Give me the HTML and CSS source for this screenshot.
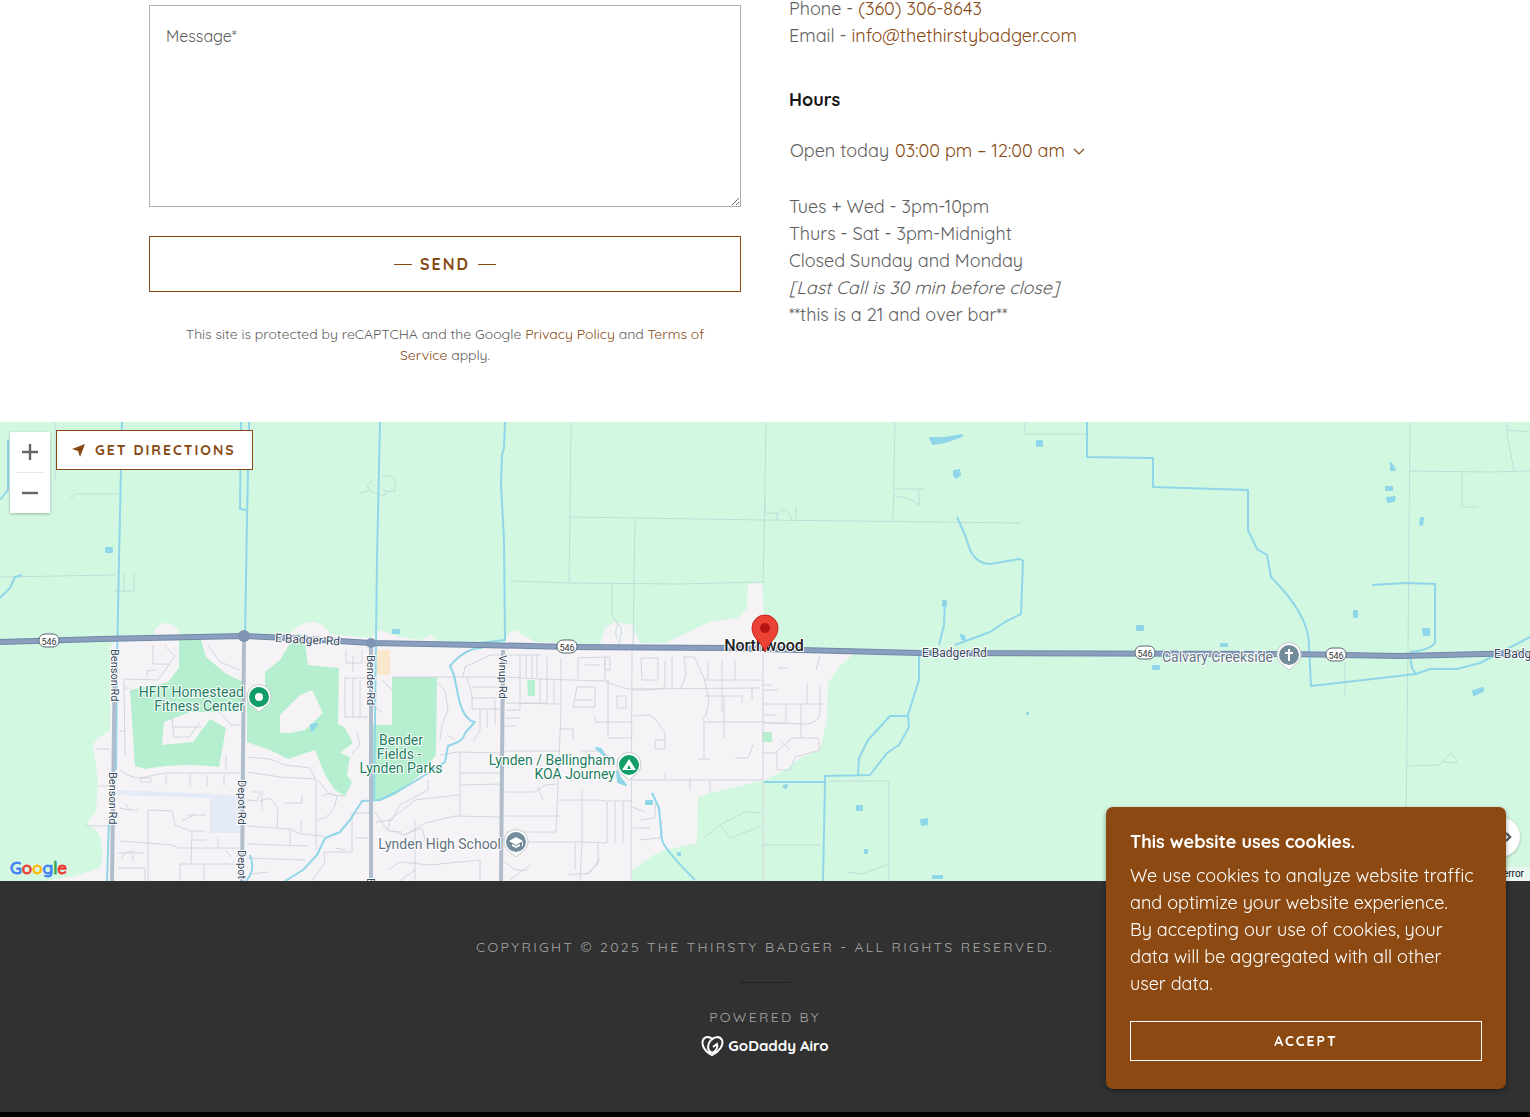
FILE: index.html
```html
<!DOCTYPE html>
<html lang="en">
<head>
<meta charset="utf-8">
<meta name="viewport" content="width=device-width, initial-scale=1">
<title>The Thirsty Badger</title>
<link rel="stylesheet" href="styles.css">
</head>
<body>
<main>
  <section class="contact">
    <form class="contact-form">
      <textarea class="message" aria-label="Message" placeholder="Message*"></textarea>
      <button class="send" type="button"><span>Send</span></button>
      <p class="legal">This site is protected by reCAPTCHA and the Google <a href="#privacy">Privacy Policy</a> and <a href="#terms">Terms of Service</a> apply.</p>
    </form>
    <div class="details">
      <p>Phone - <a href="tel:3603068643">(360) 306-8643</a></p>
      <p>Email - <a href="mailto:info@thethirstybadger.com">info@thethirstybadger.com</a></p>
      <h2>Hours</h2>
      <div class="today">Open today
        <button class="hours-toggle" type="button">03:00 pm – 12:00 am
          <svg width="12" height="12" viewBox="0 0 12 12" aria-hidden="true"><path d="M1 4l5 5 5-5" fill="none" stroke="currentColor" stroke-width="1.1"/></svg>
        </button>
      </div>
      <p>Tues + Wed - 3pm-10pm</p>
      <p>Thurs - Sat - 3pm-Midnight</p>
      <p>Closed Sunday and Monday</p>
      <p><em>[Last Call is 30 min before close]</em></p>
      <p>**this is a 21 and over bar**</p>
    </div>
  </section>

  <section class="map" aria-label="Map">
    <svg class="map-canvas" viewBox="0 422 1530 459" preserveAspectRatio="xMidYMid slice">
      <rect class="farm" x="0" y="422" width="1530" height="459"/>
      <!-- built-up area -->
      <path class="town" d="M111 645L118 640 152 639 156 628Q167 617 178 630L181 639 244 637 290 633Q315 610 330 634L370 638 380 630 400 637 420 640 432 635 440 643 505 645 507 635 515 630 535 642 600 645 605 628 615 622 632 625 640 643 665 643 710 622 738 618 747 608 748 584 762 583 766 650 853 654 838 668 828 683 827 720 820 750 800 758 788 768 765 780 710 793 698 797 697 843 665 850 652 856 632 870 632 881 45 881 75 876 100 868Q106 850 98 832L87 823 96 812 98 780 93 745Q97 737 110 731Z"/>
      <!-- rural lanes -->
      <path class="lane" d="M55 422V480M69 500L76 494H118M0 577L115 575M124 574V593M115 591H134V573M571 422L570 516 569 582M570 517L765 520 1021 523M510 581L569 583 680 584 762 582M635 519L633 650M612 584V614L618 625M619 624Q623 630 620 639L618 650M618 625Q614 630 617 639M766 422L764 545 763 583M895 422L893 521M894 489H925M894 496Q912 497 919 506V489M765 513H777V520M777 515Q783 505 790 515L792 520M796 506V520M1025 422V434H1087M1410 422L1408 650 1406 820M1410 471L1490 472 1530 471M1462 472V507H1478M1507 422L1507 434 1514 471M1507 430L1530 432M828 781H889L889 881M889 864L862 874 847 872M1345 662V697M1406 766L1440 765 1450 753Q1460 760 1455 763L1443 762M762 845H820M765 500V512M382 476Q395 474 395 482V491Q385 493 382 488M360 493L370 490M372 480L367 485 370 491 384 496 387 491M704 838L720 825 745 812 762 813M720 825L730 838 762 826"/>
      <!-- parks -->
      <path class="park" d="M179 640H201L206 657 225 673 243 682V712H190L164 722 162 745 193 742 210 719 226 728 219 767Q182 762 145 769L135 766 130 690 160 684 168 682 179 668Z"/>
      <path class="park" d="M290 643L298 633 305 643 308 665 339 668 338 724 345 728 353 743 340 753 350 757 347 775 352 782 345 796 335 790 325 775 315 750 288 759 270 750 247 742V700L265 690V672L280 660Z"/>
      <path class="town" d="M280 733V715L300 695 312 690 323 713 305 730 290 733Z"/>
      <path class="park" d="M392 677H437L436 755 420 775 395 795 380 801 372 799 373 725H392ZM527 680H535V696H528ZM762 732H772V742H762Z"/>
      <path fill="#fbe8cc" d="M377 650H390V675H377Z"/>
      <path fill="#e4ebf7" d="M117 790L240 795V833H210V798L117 795Z"/>
      <!-- town streets -->
      <path class="street" d="M153 645V664H170M164 645L175 656 158 680 124 679 125 755M147 678V671L156 670M125 688H130M208 645L220 662 240 670M172 718L174 737H189L200 722M174 727H202M119 731H126M97 749H110M98 786H110M120 770Q130 778 140 778L165 773H240M140 778H151V782H141ZM166 774V785M190 774V786M207 775V786M224 775V786M218 710L231 725H242M226 770V755M120 808L130 810M125 803L130 810H138M148 881V810L172 811 175 825 192 832 191 863M182 821L195 814M188 815H206M120 841L172 845 178 848H240M192 831H205M191 840H206M180 881V864H240M118 868H145V881M122 858Q123 850 135 852M133 855V862M204 864V881M218 838V848M225 850L232 857M118 853H143M85 826H110"/>
      <path class="street" d="M247 757L270 759 285 765 310 768 316 780V850M247 772L280 777 316 779M252 792H260L257 801 247 800M260 801L270 798 278 808 277 828M262 790V810M302 795V803H285M247 826L290 829 300 834 324 836M247 844L308 846M290 829V845M247 858L305 860M301 820V833M322 796Q333 790 337 797Q334 818 317 820M318 780L330 795 346 796M353 655V672M346 650V663H362V650M345 677V717M345 678H368M345 717H368M353 678V717M360 680V718M357 733L360 745 352 754M372 705L382 712M382 680L392 690M353 813H370M352 813V852H324L325 862 312 881M355 838H368M335 848L345 850M250 874L268 872M376 822L392 820 400 805 428 790V780M375 812L388 831 402 832M388 830L390 820 415 800 458 795M392 831L405 835 425 823 455 816 500 817M403 835L422 828 428 850M415 820V881M440 755L458 752M460 752V815M460 785L500 784M460 773H500M458 752L500 753M436 682L445 690 448 710 442 725 440 740M447 735L455 740"/>
      <path class="street" d="M392 677H502M463 677L465 667 490 655H502M467 677L472 695V709H500M472 687H500M472 698H500M480 709V730L473 742M487 711V728M495 700V725M506 677L540 679 605 681 615 685 628 689 760 688M506 655H540M520 655V710H506M526 655V678M532 655V678M537 655V678M547 657V703H521M540 678V703M554 680V703M561 658V710L556 832H506M506 703L560 704M506 718H520M505 726H517M505 751H560M560 729H573V740M505 792H535L545 785 556 784M538 787L543 800M505 816H560M557 800H600L605 801H632M607 802V843L582 842H506M582 790V842L580 881M605 680V657L578 658V678M577 687H595V707H573ZM575 700H593M585 665H600M605 657H610V670H605ZM617 696H626V708H617ZM608 680V738H632M594 715L596 722 632 722M580 751H600L610 757M632 650L631 881M632 690H650L665 688V661M633 716L650 715 656 720 665 733V749H655V740H665M641 658H658V680H642ZM672 657V688M680 690L686 675 684 657H695M695 658L704 678 709 700 706 715 702 720M705 680H762M722 660V713M708 661V679M735 660V680M752 687V700M705 696H742V703M703 722H765M724 697V738M704 722V759M698 759H710M735 758H748L753 745M632 780H762M665 780V773M690 790V778M710 780V793M615 801V843M623 801V843M598 843V864L585 875M575 843V870M640 840L660 838 662 820M640 820L655 818V803M632 807L645 812M633 828H650M568 875L590 873 600 858M388 870L400 862 430 865 480 860V881M400 881L415 870M505 862L515 870 528 870M510 880L530 865"/>
      <path class="street" d="M762 704H823M786 704V723H764M801 704V738M820 685V710Q820 724 805 724L764 723M807 683V704M820 655L816 670M762 685H772M762 690H778M764 715H777M775 753L792 738H818L820 750 795 757 790 770H777V753H762M780 740L790 750M778 668H787M763 650V881"/>
      <!-- water -->
      <path class="water" d="M8 440V490L0 500M0 598L10 588 15 577 22 575M122 422L119 560 117 660 116 770M109 820L107 881M241 422L240 509 246 510M249 422L247 520 245 640M380 422L377 560 376 640 374 800M505 422L504 448 502 455 501 485 504 540 505 640 480 643M957 517L965 535 970 550Q977 564 990 564L1020 559 1023 561 1021 614 1005 622 990 632 955 645M945 600L944 625 939 645M1087 422V457L1153 458V487L1248 490V530L1257 549 1267 555 1271 577Q1309 615 1309 645L1311 686 1416 674 1430 669H1457L1480 663 1530 637M1410 657L1412 668 1416 674M1372 585L1406 583 1435 584V643Q1430 650 1410 652M919 655V680L908 715 909 727 899 745 887 753 870 775 825 776V782L823 881M908 716H890L868 740 859 758 858 775M764 782H824M652 793L659 808 662 840Q665 850 695 880M250 855Q256 870 246 881"/>
      <path class="water" d="M482 648Q465 648 450 666L454 675 458 695Q463 720 475 722L465 733 463 738 458 742 448 746 445 762 430 772 417 780 400 790 380 800 362 801 350 820 340 832 325 838 317 855 303 870 285 881"/>
      <path class="pond" d="M106 548H112V552H106ZM393 630H399V633H393ZM1037 441H1042V446H1037ZM930 438L945 438 962 435 962 436 945 442 933 444ZM954 471L959 470 960 475 956 478 954 475ZM943 601H946V606H943ZM961 635L964 636 965 640 962 639ZM1137 626H1143V630H1137ZM1221 644H1227V646H1221ZM1354 611H1357V617H1354ZM1423 629H1429V635H1424ZM1391 463L1395 470 1391 470ZM1386 487H1392V490H1386ZM1387 498L1395 497 1394 501 1388 502ZM1421 518H1423L1422 525 1420 524ZM1473 691L1483 688 1483 691 1474 695ZM1153 666L1159 666 1159 669 1153 669ZM857 806H862V810H857ZM921 820L927 819 927 824 922 825ZM865 850H867V853H865ZM933 876H942V878H933ZM784 786L787 785 786 788 784 787ZM646 801H652V804H646ZM678 853H680V855H678ZM1027 713H1028V714H1027ZM311 725L317 724 312 731ZM596 748L601 749 605 756ZM617 771L620 778 626 785 618 782Z"/>
      <!-- arterials -->
      <path class="road" d="M115 650L112 881M244 640L242 881M371 645V881M503 650L501 881"/>
      <path class="highway-edge" d="M0 642L100 639 244 636 290 638 371 643 480 645 570 647 725 648 800 650 920 653 1290 654 1400 656 1530 653"/>
      <path class="highway" d="M0 642L100 639 244 636 290 638 371 643 480 645 570 647 725 648 800 650 920 653 1290 654 1400 656 1530 653"/>
      <circle cx="244" cy="636" r="6" fill="#7f94b2"/><circle cx="371" cy="643" r="5" fill="#7f94b2"/>
      <!-- route shields -->
      <g class="shield">
        <rect x="39" y="634" width="20" height="13" rx="6"/><text x="49" y="645">546</text>
        <rect x="557" y="640" width="20" height="13" rx="6"/><text x="567" y="651">546</text>
        <rect x="1135" y="646" width="20" height="13" rx="6"/><text x="1145" y="657">546</text>
        <rect x="1326" y="648" width="20" height="13" rx="6"/><text x="1336" y="659">546</text>
      </g>
      <!-- street names -->
      <g class="road-name">
        <text x="275" y="642" transform="rotate(3 275 642)">E Badger Rd</text>
        <text x="922" y="657">E Badger Rd</text>
        <text x="1494" y="658">E Badger Rd</text>
      </g>
      <g class="road-name small">
        <text transform="translate(111 649) rotate(90)">Benson Rd</text>
        <text transform="translate(109 772) rotate(90)">Benson Rd</text>
        <text transform="translate(238 780) rotate(90)">Depot Rd</text>
        <text transform="translate(238 850) rotate(90)">Depot Rd</text>
        <text transform="translate(367 655) rotate(90)">Bender Rd</text>
        <text transform="translate(367 878) rotate(90)">Bender Rd</text>
        <text transform="translate(499 655) rotate(90)">Vinup Rd</text>
      </g>
      <g class="place green">
        <text x="244" y="697" text-anchor="end">HFIT Homestead</text>
        <text x="244" y="711" text-anchor="end">Fitness Center</text>
        <text x="401" y="745" text-anchor="middle">Bender</text>
        <text x="399" y="759" text-anchor="middle">Fields -</text>
        <text x="401" y="773" text-anchor="middle">Lynden Parks</text>
        <text x="615" y="765" text-anchor="end">Lynden / Bellingham</text>
        <text x="615" y="779" text-anchor="end">KOA Journey</text>
      </g>
      <g class="place grey">
        <text x="501" y="849" text-anchor="end">Lynden High School</text>
        <text x="1273" y="662" text-anchor="end">Calvary Creekside</text>
      </g>
      <text class="city" x="764" y="651" text-anchor="middle">Northwood</text>
      <!-- place markers -->
      <g class="poi">
        <g transform="translate(259 697)"><path class="poi-rim" d="M0 15L-6 10A12 12 0 1 1 6 10Z"/><circle r="10" fill="#129e68"/><circle r="4" fill="#fff"/></g>
        <g transform="translate(629 765)"><path class="poi-rim" d="M0 15L-6 10A12 12 0 1 1 6 10Z"/><circle r="10" fill="#129e68"/><path d="M0-6L7 5H-7ZM0 0L-2 4H2Z" fill="#fff" fill-rule="evenodd"/></g>
        <g transform="translate(516 842)"><path class="poi-rim" d="M0 15L-6 10A12 12 0 1 1 6 10Z"/><circle r="10" fill="#738c9c"/><path d="M0-5L7-1 0 3-7-1ZM-4 2L0 4 4 2V4L0 6-4 4ZM6 0H7V4H6Z" fill="#fff"/></g>
        <g transform="translate(1289 655)"><path class="poi-rim" d="M0 15L-6 10A12 12 0 1 1 6 10Z"/><circle r="10" fill="#738c9c"/><path d="M-1-6H1V-3H4V-1H1V6H-1V-1H-4V-3H-1Z" fill="#fff"/></g>
      </g>
      <path d="M765 652C763 643 752 639 752 628A13 13 0 1 1 778 628C778 639 767 643 765 652Z" fill="#ea4335" stroke="#c5221f"/>
      <circle cx="765" cy="628" r="5" fill="#b31412"/>
    </svg>
    <div class="map-tools">
      <div class="zoom">
        <button type="button" aria-label="Zoom in"><svg width="18" height="18" viewBox="0 0 18 18"><path d="M9 1V17M1 9H17" stroke="#666" stroke-width="2.4"/></svg></button>
        <button type="button" aria-label="Zoom out"><svg width="18" height="18" viewBox="0 0 18 18"><path d="M1 9H17" stroke="#666" stroke-width="2.4"/></svg></button>
      </div>
      <a class="directions" href="#directions"><svg width="13" height="13" viewBox="0 0 13 13" aria-hidden="true"><path d="M13 0L8 13 6 7 0 5Z" fill="currentColor"/></svg>Get directions</a>
    </div>
    <div class="google"><span class="g-blue">G</span><span class="g-red">o</span><span class="g-yellow">o</span><span class="g-blue">g</span><span class="g-green">l</span><span class="g-red">e</span></div>
    <button class="pan" type="button" aria-label="Map camera controls"><svg width="26" height="26" viewBox="0 0 26 26" fill="none" stroke="#555" stroke-width="2.4"><path d="M19 9l4 4-4 4M7 9l-4 4 4 4M9 7l4-4 4 4M9 19l4 4 4-4"/></svg></button>
    <a class="report" href="#report">Report a map error</a>
  </section>
</main>

<footer class="footer">
  <p>Copyright © 2025 The Thirsty Badger - All Rights Reserved.</p>
  <hr>
  <p>Powered by</p>
  <a class="godaddy" href="#godaddy">
    <svg width="23" height="20" viewBox="0 0 23 20" fill="none" stroke="#fff" stroke-width="2" aria-hidden="true"><path d="M12 4C9 0 4 0 2 4C0 9 4 16 11 19C18 16 23 9 21 4C18-1 11 1 8 7C6 12 7 15 11 17M11 17C15 15 17 12 16 8L12 11"/></svg>
    <span>GoDaddy</span><span class="airo">Airo</span>
  </a>
</footer>

<aside class="cookies">
  <h2>This website uses cookies.</h2>
  <p>We use cookies to analyze website traffic and optimize your website experience.<br>By accepting our use of cookies, your data will be aggregated with all other user data.</p>
  <button type="button">Accept</button>
</aside>
</body>
</html>
```

FILE: styles.css
```css
* { box-sizing: border-box; }

body {
  margin: 0;
  background: #000;
  color: #5e5e5e;
  font: 400 18px/27px Quicksand, Lato, sans-serif;
}

main { background: #fff; }
p, h2 { margin: 0; }
a { color: #864913; text-decoration: none; }
button { font-family: inherit; cursor: pointer; }

/* Contact */
.contact {
  display: grid;
  grid-template-columns: 1fr 1fr;
  gap: 48px;
  max-width: 1280px;
  margin: 0 auto;
  padding: 5px 24px 56px;
}

.contact-form { display: flex; flex-direction: column; }

.message {
  height: 202px;
  padding: 18px 16px;
  border: 1px solid #b0b0b0;
  background: #fff;
  color: #5e5e5e;
  font: 400 16px/24px Quicksand, Lato, sans-serif;
  resize: vertical;
}
.message::placeholder { color: #5e5e5e; opacity: 1; }

.send {
  display: flex;
  align-items: center;
  justify-content: center;
  gap: 8px;
  height: 56px;
  margin-top: 29px;
  border: 1px solid #864913;
  background: #fff;
  color: #864913;
  font-size: 16px;
  font-weight: 700;
  letter-spacing: 2px;
  text-transform: uppercase;
}
.send::before, .send::after {
  content: "";
  width: 18px;
  height: 1px;
  background: currentColor;
}

.legal {
  margin-top: 32px;
  padding: 0 32px;
  font-size: 14px;
  line-height: 21px;
  text-align: center;
}

.details { margin-top: -10px; }
.details h2 {
  margin-top: 37px;
  color: #161616;
  font-size: 18px;
  font-weight: 700;
}
.today {
  display: flex;
  gap: 6px;
  margin: 24px 0 29px;
  padding-left: 1px;
}
.hours-toggle {
  display: flex;
  align-items: center;
  gap: 8px;
  padding: 0;
  border: 0;
  background: none;
  color: #864913;
  font-size: 18px;
  line-height: 27px;
}

/* Map */
.map {
  position: relative;
  height: 459px;
  overflow: hidden;
  font-family: Roboto, sans-serif;
}
.map-canvas { display: block; width: 100%; height: 100%; }
.farm { fill: #d3f8e2; }
.town { fill: #f5f3f5; }
.park { fill: #b6efcf; }
.pond { fill: #8fd6e8; stroke: #8fd6e8; stroke-width: 2; stroke-linejoin: round; }
.lane, .street, .water, .road, .highway, .highway-edge { fill: none; stroke-linejoin: round; }
.lane { stroke: #c2dcd9; }
.street { stroke: #d2d6df; }
.water { stroke: #8fd6e8; stroke-width: 2; }
.road { stroke: #b0bdcd; stroke-width: 4; }
.highway-edge { stroke: #7189a8; stroke-width: 6; }
.highway { stroke: #8a9fbd; stroke-width: 4; }
.shield rect { fill: #fff; stroke: #5b6670; }
.shield text { fill: #333; font-size: 9px; text-anchor: middle; }
.road-name, .place, .city { paint-order: stroke; stroke: #fff; stroke-width: 2px; }
.road-name { fill: #33475b; font-size: 12px; }
.small { font-size: 11px; }
.place { font-size: 14px; }
.green { fill: #1d7d5f; }
.grey { fill: #5f7383; }
.city { fill: #202124; font-size: 16px; font-weight: 500; }
.poi-rim { fill: #fff; stroke: #c3cac9; }

.map-tools {
  position: absolute;
  top: 8px;
  left: 10px;
  display: flex;
  align-items: flex-start;
  gap: 6px;
}
.zoom {
  display: flex;
  flex-direction: column;
  margin-top: 2px;
  background: #fff;
  box-shadow: 0 1px 3px #0004;
}
.zoom button {
  display: grid;
  place-items: center;
  width: 40px;
  height: 40px;
  padding: 0;
  border: 0;
  background: none;
}
.zoom button + button { height: 41px; background: linear-gradient(#e6e6e6, #e6e6e6) 50% 0 / 28px 1px no-repeat; }

.directions {
  display: flex;
  align-items: center;
  gap: 10px;
  height: 40px;
  padding: 0 16px 0 15px;
  border: 1px solid #864913;
  background: #fff;
  font: 700 14px/20px Quicksand, Lato, sans-serif;
  letter-spacing: 2px;
  text-transform: uppercase;
}

.google {
  position: absolute;
  bottom: 2px;
  left: 10px;
  font: 500 17px/22px Quicksand, Lato, sans-serif;
  -webkit-text-stroke: 1px currentColor;
  text-shadow: 0 0 2px #fff;
}
.g-blue { color: #4285f4; }
.g-red { color: #ea4335; }
.g-yellow { color: #fbbc04; }
.g-green { color: #34a853; }

.pan {
  position: absolute;
  right: 10px;
  bottom: 24px;
  display: grid;
  place-items: center;
  width: 40px;
  height: 40px;
  padding: 0;
  border: 0;
  border-radius: 50%;
  background: #fff;
  box-shadow: 0 1px 3px #0004;
}
.report {
  position: absolute;
  right: 0;
  bottom: 0;
  padding: 0 6px;
  background: #e9f8f0;
  color: #111;
  font-size: 10px;
  line-height: 14px;
}

/* Footer */
.footer {
  display: flex;
  flex-direction: column;
  align-items: center;
  padding: 56px 24px;
  background: #313131;
  color: #a4a4a4;
  font-size: 14px;
  line-height: 20px;
  letter-spacing: 0.167em;
  text-align: center;
  text-transform: uppercase;
  border-bottom: 5px solid #000;
}
.footer hr {
  width: 50px;
  margin: 25px 0 24px;
  border: 0;
  border-top: 1px solid #222;
}
.godaddy {
  display: flex;
  align-items: center;
  gap: 4px;
  margin-top: 9px;
  color: #fff;
  font-size: 15px;
  font-weight: 900;
  letter-spacing: normal;
  text-transform: none;
}
.airo { font-weight: 700; }

/* Cookie notice */
.cookies {
  position: fixed;
  right: 24px;
  bottom: 28px;
  width: 400px;
  padding: 21px 24px 28px;
  border-radius: 7px;
  background: #8c4a12;
  color: #fff;
  box-shadow: 0 2px 5px #0006;
}
.cookies h2 { margin-bottom: 7px; font-size: 18px; }
.cookies button {
  width: 100%;
  height: 40px;
  margin-top: 24px;
  border: 1px solid #fff;
  background: none;
  color: #fff;
  font-size: 14px;
  font-weight: 700;
  letter-spacing: 2px;
  text-transform: uppercase;
}
```
